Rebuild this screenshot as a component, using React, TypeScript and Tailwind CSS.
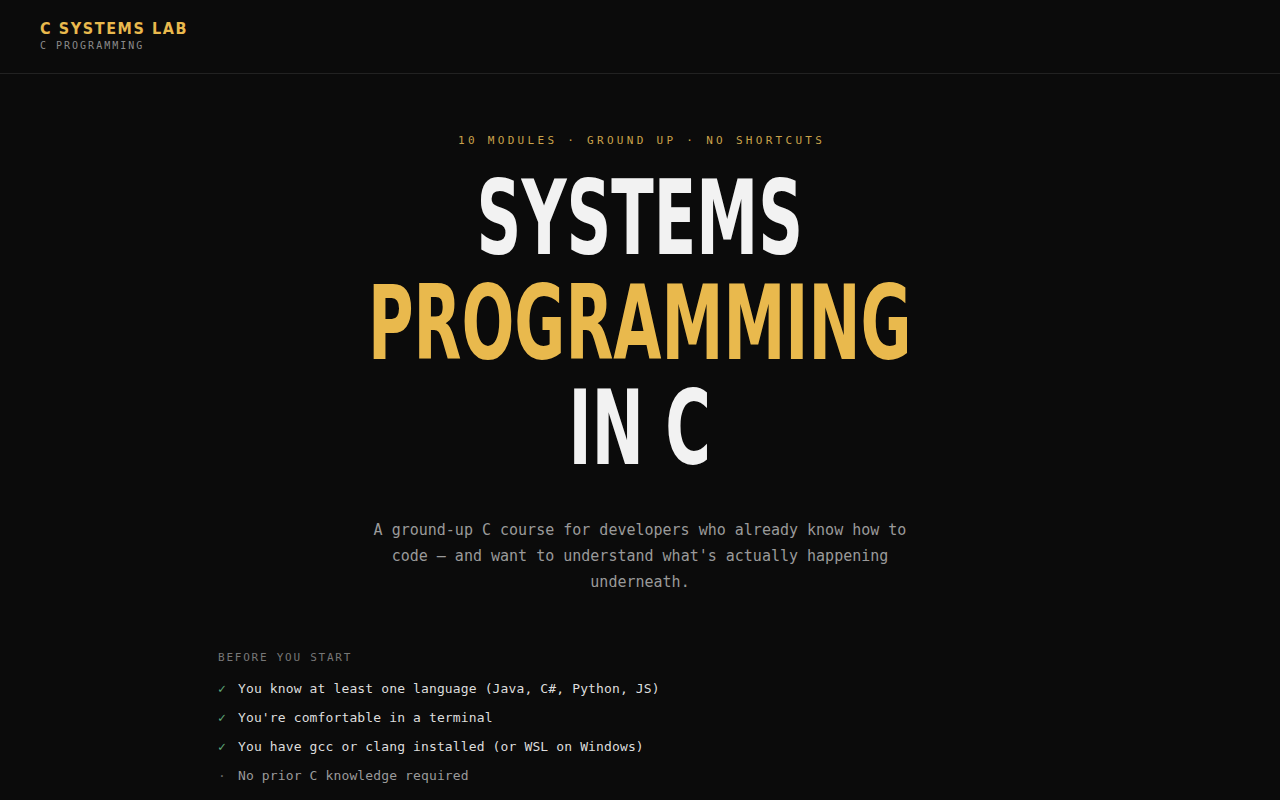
const display = 'font-["DejaVu_Sans_Condensed","Liberation_Sans",sans-serif]';
const mono = 'font-["DejaVu_Sans_Mono","Liberation_Mono",monospace]';

const prereqs = [
  { ok: true, text: 'You know at least one language (Java, C#, Python, JS)' },
  { ok: true, text: "You're comfortable in a terminal" },
  { ok: true, text: 'You have gcc or clang installed (or WSL on Windows)' },
  { ok: false, text: 'No prior C knowledge required' },
];

export default function App() {
  return (
    <div className={`min-h-screen bg-[#0b0b0b] text-[#f2f2f2] ${mono}`}>
      {/* Top bar */}
      <header className="h-[74px] border-b border-[#222222] px-10 flex flex-col justify-center">
        <div className={`${display} font-bold text-[16px] leading-[18px] tracking-[1.6px] text-[#e9b94d]`}>
          C SYSTEMS LAB
        </div>
        <div className="mt-[1px] text-[10px] leading-[14px] tracking-[0.2em] text-[#8a8a8a]">C PROGRAMMING</div>
      </header>

      <main className="flex flex-col items-center">
        {/* Hero */}
        <p className="mt-[60px] text-[11px] leading-[14px] tracking-[0.3em] text-[#c9a24a] pl-[0.3em]">
          10 MODULES · GROUND UP · NO SHORTCUTS
        </p>

        <h1 className={`${display} font-bold text-[104px] leading-[105px] text-center mt-[18px]`}>
          <span className="block scale-x-[0.665] text-[#f2f2f2]">SYSTEMS</span>
          <span className="block scale-x-[0.665] text-[#e9b94d]">PROGRAMMING</span>
          <span className="block scale-x-[0.665] text-[#f2f2f2]">IN C</span>
        </h1>

        <p className="mt-[36px] w-[560px] text-center text-[15px] leading-[26px] text-[#9a9a9a]">
          A ground-up C course for developers who already know how to code — and want to understand what's actually
          happening underneath.
        </p>

        {/* Prerequisites */}
        <section className="w-[844px] mt-[56px]">
          <h2 className="text-[11px] leading-[14px] tracking-[0.16em] text-[#777777]">BEFORE YOU START</h2>
          <ul className="mt-[9px] flex flex-col">
            {prereqs.map((p) => (
              <li key={p.text} className="flex items-center h-[29px] text-[13px] tracking-[0.01em]">
                <span className={`w-5 ${p.ok ? 'text-[#5fa87a]' : 'text-[#666666]'}`}>{p.ok ? '✓' : '·'}</span>
                <span className={p.ok ? 'text-[#dddddd]' : 'text-[#9a9a9a]'}>{p.text}</span>
              </li>
            ))}
          </ul>
        </section>
      </main>
    </div>
  );
}
